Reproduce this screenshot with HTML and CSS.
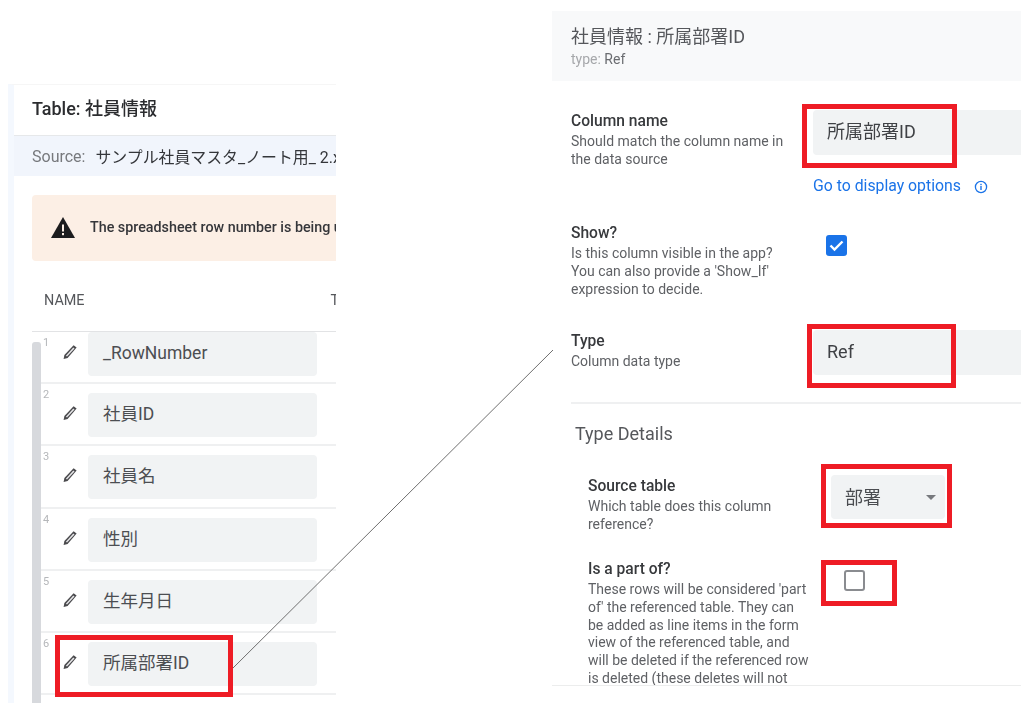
FILE: index.html
```html
<!DOCTYPE html>
<html lang="ja">
<head>
<meta charset="utf-8">
<title>社員情報</title>
<link rel="stylesheet" href="styles.css">
</head>
<body>
<main class="canvas">
  <section class="table-panel">
    <h1 class="table-title">Table: 社員情報</h1>
    <div class="source-bar"><span class="source-label">Source:</span><span class="source-name">サンプル社員マスタ_ノート用_ 2.xlsx</span></div>
    <div class="warning">
      <svg class="warning-icon" viewBox="0 0 24 22"><path d="M12 0 L24 21 L0 21 Z" fill="#1c1c1e"/><rect x="11" y="7.5" width="2" height="7" fill="#fcefe5"/><rect x="11" y="16" width="2" height="2.2" fill="#fcefe5"/></svg>
      <span class="warning-text">The spreadsheet row number is being used as the key column for this table</span>
    </div>
    <div class="table-head"><span>NAME</span><span class="head-type">TYPE</span></div>
    <div class="table-body">
      <div class="scroll-thumb"></div>
      <div class="row"><span class="num">1</span><svg class="pen" viewBox="0 0 16 16"><use href="#pencil"/></svg><div class="name-box">_RowNumber</div></div>
      <div class="row"><span class="num">2</span><svg class="pen" viewBox="0 0 16 16"><use href="#pencil"/></svg><div class="name-box">社員ID</div></div>
      <div class="row"><span class="num">3</span><svg class="pen" viewBox="0 0 16 16"><use href="#pencil"/></svg><div class="name-box">社員名</div></div>
      <div class="row"><span class="num">4</span><svg class="pen" viewBox="0 0 16 16"><use href="#pencil"/></svg><div class="name-box">性別</div></div>
      <div class="row"><span class="num">5</span><svg class="pen" viewBox="0 0 16 16"><use href="#pencil"/></svg><div class="name-box">生年月日</div></div>
      <div class="row"><span class="num">6</span><svg class="pen" viewBox="0 0 16 16"><use href="#pencil"/></svg><div class="name-box">所属部署ID</div></div>
    </div>
  </section>

  <section class="detail-panel">
    <header class="detail-head">
      <div class="detail-title">社員情報 : 所属部署ID</div>
      <div class="detail-type"><span class="type-key">type:</span> Ref</div>
    </header>
    <div class="detail-body">
      <div class="setting setting-name">
        <div class="label-col"><div class="label">Column name</div><p class="desc">Should match the column name in the data source</p></div>
        <div class="control-col">
          <div class="field">所属部署ID</div>
          <div class="display-link"><span>Go to display options</span><svg class="info" viewBox="0 0 14 14"><circle cx="7" cy="7" r="5.6" fill="none" stroke="#1a73e8" stroke-width="1.3"/><rect x="6.3" y="6" width="1.4" height="4" fill="#1a73e8"/><rect x="6.3" y="3.8" width="1.4" height="1.4" fill="#1a73e8"/></svg></div>
        </div>
      </div>
      <div class="setting setting-show">
        <div class="label-col"><div class="label">Show?</div><p class="desc">Is this column visible in the app? You can also provide a 'Show_If' expression to decide.</p></div>
        <div class="control-col"><svg class="check" viewBox="0 0 21 21"><rect width="21" height="21" rx="3" fill="#1a73e8"/><path d="M4.5 10.5 L8.5 14.5 L16.5 6.5" fill="none" stroke="#fff" stroke-width="2.4"/></svg></div>
      </div>
      <div class="setting setting-type">
        <div class="label-col"><div class="label">Type</div><p class="desc">Column data type</p></div>
        <div class="control-col"><div class="field">Ref</div></div>
      </div>
      <div class="details">
        <h2 class="details-title">Type Details</h2>
        <div class="sub-setting sub-source">
          <div class="sub-label-col"><div class="label">Source table</div><p class="desc">Which table does this column reference?</p></div>
          <div class="select"><span class="select-value">部署</span><i class="caret"></i></div>
        </div>
        <div class="sub-setting">
          <div class="sub-label-col"><div class="label">Is a part of?</div><p class="desc">These rows will be considered 'part of' the referenced table. They can be added as line items in the form view of the referenced table, and will be deleted if the referenced row is deleted (these deletes will not</p></div>
          <div class="empty-check"></div>
        </div>
      </div>
    </div>
  </section>

  <svg class="connector" viewBox="0 0 1024 714"><line x1="232" y1="669" x2="553" y2="350" stroke="#6f6f6f" stroke-width="1"/></svg>
  <div class="mark mark-row"></div>
  <div class="mark mark-name"></div>
  <div class="mark mark-type"></div>
  <div class="mark mark-source"></div>
  <div class="mark mark-part"></div>
</main>
<svg class="defs" width="0" height="0"><defs><g id="pencil"><path d="M11.6 1.2 L14.6 3.6 L5.6 14 L1.6 15 L2.4 11 Z" fill="#4a4a4d"/><path d="M11.3 3.4 L12.5 4.4 L5 12.6 L3.9 11.7 Z" fill="#e6e6e8"/></g></defs></svg>
</body>
</html>
```
FILE: styles.css
```css
* { box-sizing: border-box; }
html, body { margin: 0; height: 100%; background: #fff; }
body { font-family: Roboto, "Noto Sans CJK JP", sans-serif; color: #3c4043; overflow: hidden; }
.canvas { position: relative; width: 1024px; height: 714px; overflow: hidden; filter: blur(0.5px); }
.defs { position: absolute; }

.table-panel { position: absolute; left: 8px; top: 84px; width: 328px; height: 619px; border-left: 6px solid #f4f8fe; border-top: 1px solid #f6f6f6; overflow: hidden; }
.table-title { margin: 0; height: 50px; padding: 0 0 0 18px; font-size: 18px; font-weight: 500; line-height: 48px; color: #2b2c2f; white-space: nowrap; }
.source-bar { margin-left: -6px; display: flex; align-items: center; gap: 10px; height: 41px; padding-left: 24px; background: #f1f5fc; border-top: 1px solid #e6e8ea; white-space: nowrap; font-size: 16px; }
.source-label { color: #77797d; }
.source-name { color: #34363a; font-size: 15.9px; }
.warning { display: flex; align-items: center; gap: 15px; height: 66px; margin: 19px 0 0 18px; padding-left: 19px; background: #fcefe5; border-radius: 4px 0 0 4px; white-space: nowrap; font-size: 14.3px; font-weight: 500; color: #35363a; overflow: hidden; }
.warning-icon { width: 24px; height: 22px; flex: none; }
.warning-text { margin-top: -2px; }
.table-head { display: flex; height: 70px; padding: 31px 0 0 30px; font-size: 14.4px; color: #55575b; }
.head-type { margin-left: 246px; }
.table-body { position: relative; margin-left: 18px; border-top: 1px solid #e2e3e5; }
.scroll-thumb { position: absolute; left: 0; top: 10px; width: 9px; height: 370px; background: #d7d9dd; border-radius: 3px 3px 0 0; }
.row { display: flex; align-items: flex-start; height: 62.3px; margin-left: 9px; padding: 0 0 0 3px; border-bottom: 2px solid #eff0f1; position: relative; }
.scroll-thumb + .row { height: 52px; }
.num { position: absolute; left: 2px; top: 4px; font-size: 11px; color: #b5b7ba; }
.pen { width: 16px; height: 16px; margin: 12px 0 0 18px; flex: none; }
.name-box { width: 229px; height: 44px; margin: 0 0 0 10px; padding-left: 15px; line-height: 43px; font-size: 17.5px; color: #4c4e52; background: #f1f3f4; border-radius: 4px; }
.row + .row .name-box { margin-top: 9px; }
.row + .row .pen { margin-top: 21px; }

.detail-panel { position: absolute; left: 552px; top: 11px; width: 469px; height: 675px; border-bottom: 1px solid #eceded; overflow: hidden; }
.detail-head { height: 70px; padding: 15px 0 0 19px; background: #f8f9fa; }
.detail-title { font-size: 18px; line-height: 22px; color: #55575b; white-space: nowrap; }
.detail-type { margin-top: 3px; font-size: 14px; line-height: 16px; color: #6a6c70; }
.type-key { color: #a6a8ab; }
.detail-body { padding-left: 19px; }
.setting { display: flex; }
.setting-name { padding-top: 29px; height: 139px; }
.setting-show { height: 111px; padding-top: 2px; }
.setting-type { height: 71px; padding-top: 0; }
.label-col { width: 242px; flex: none; padding-top: 1px; }
.label { font-size: 15.6px; line-height: 20px; font-weight: 500; color: #37393c; white-space: nowrap; }
.desc { width: 226px; margin: 2px 0 0; font-size: 14px; line-height: 17.8px; color: #5f6165; }
.control-col { flex: 1; min-width: 0; }
.field { height: 45px; padding-left: 14px; line-height: 43px; font-size: 18px; color: #3f4145; background: #f1f3f4; border-radius: 4px 0 0 4px; }
.display-link { display: flex; align-items: center; gap: 13px; margin-top: 20px; font-size: 15.8px; line-height: 22px; color: #1a73e8; white-space: nowrap; }
.info { width: 14px; height: 14px; margin-top: 2px; }
.check { width: 21px; height: 21px; margin: 13px 0 0 13px; display: block; }
.setting-type .field { margin-top: -1px; }
.setting-type .label-col { padding-top: 0; }

.details { border-top: 2px solid #eff0f1; }
.details-title { margin: 0; padding: 19px 0 0 4px; font-size: 18px; line-height: 22px; font-weight: 400; color: #55575b; }
.sub-setting { display: flex; padding-left: 17px; }
.sub-source { height: 83px; margin-top: 31px; }
.sub-label-col { width: 243px; flex: none; }
.sub-label-col .desc { width: 223px; }
.select { display: flex; align-items: center; justify-content: space-between; width: 114px; height: 44px; margin: -1px 0 0 0; padding: 0 9px 0 14px; font-size: 18px; color: #4a4c50; background: #f1f3f4; border-radius: 4px; }
.select-value { margin-top: -3px; }
.caret { width: 0; height: 0; border-left: 5.5px solid transparent; border-right: 5.5px solid transparent; border-top: 5px solid #77797d; }
.empty-check { width: 21px; height: 21px; margin: 11px 0 0 13px; border: 2px solid #8a8c90; border-radius: 3px; }

.connector { position: absolute; inset: 0; width: 1024px; height: 714px; }
.mark { position: absolute; border: 5px solid #ee1c25; }
.mark-row { left: 55px; top: 635px; width: 178px; height: 62px; }
.mark-name { left: 802px; top: 104px; width: 155px; height: 64px; }
.mark-type { left: 807px; top: 324px; width: 149px; height: 64px; }
.mark-source { left: 821px; top: 464px; width: 131px; height: 64px; }
.mark-part { left: 821px; top: 560px; width: 76px; height: 46px; }
```
